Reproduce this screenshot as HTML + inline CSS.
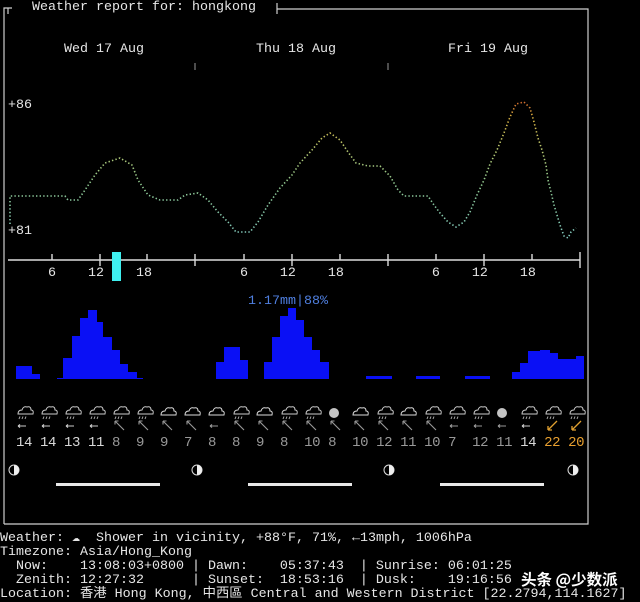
<!DOCTYPE html>
<html><head><meta charset="utf-8">
<style>
html,body{margin:0;padding:0;background:#000;width:640px;height:602px;overflow:hidden}
body{position:relative;font-family:"Liberation Mono","DejaVu Sans Mono","Noto Sans CJK SC",monospace;font-size:13.33px;color:#e6e6e6}
.t{position:absolute;white-space:pre;line-height:14px}
svg{position:absolute;left:0;top:0}
</style></head><body>
<svg width="640" height="602" viewBox="0 0 640 602">
<defs>
<linearGradient id="tg" x1="0" y1="100" x2="0" y2="240" gradientUnits="userSpaceOnUse">
<stop offset="0" stop-color="#d0602a"/><stop offset="0.12" stop-color="#d8b040"/><stop offset="0.35" stop-color="#b8c870"/><stop offset="0.6" stop-color="#8fc890"/><stop offset="1" stop-color="#80c8c0"/>
</linearGradient>
<g id="cl" fill="none" stroke="#ccc" stroke-width="1"><path d="M-6 2 q0 -4 4 -4 q1 -4 5 -3 q4 -1 4 3 q3 0 2 4 z"/><path d="M-4 4.5 l-1 2.5 M-1 4.5 l-1 2.5 M2 4.5 l-1 2.5" stroke="#aaa"/></g>
<g id="cl2" fill="none" stroke="#ddd" stroke-width="1"><path d="M-7 3 q0 -4 4 -4 q1 -4 5 -3 q4 -1 4 3 q3 0 2 4 z"/></g>
<g id="aw" stroke-width="1.1" fill="none"><path d="M-4 0 H4 M-4 0 l2 -1.6 M-4 0 l2 1.6"/></g>
<g id="anw" stroke-width="1.1" fill="none"><path d="M-5 -5 L4 4 M-5 -5 h3.5 M-5 -5 v3.5"/></g>
<g id="asw" stroke-width="1.3" fill="none"><path d="M5 -5 L-4 4 M-4 4 h4 M-4 4 v-4"/></g>
<g id="moon"><circle r="5" fill="#000" stroke="#ddd" stroke-width="1"/><path d="M0 -5 A5 5 0 0 1 0 5 Z" fill="#eee"/></g>
</defs>
<g stroke="#cfcfcf" stroke-width="1.2" fill="none">
<path d="M4 524 V8 H12 M8 8 V14"/>
<path d="M277 3 V14 M277 9 H588 V524 H4"/>
</g>
<g stroke="#999" stroke-width="1">
<path d="M195 63 V70 M388 63 V70"/>
</g>
<polyline fill="none" stroke="url(#tg)" stroke-width="1.6" stroke-dasharray="1.4 2.2"
points="10,224 10,196 65,196 68,200 78,200 85,190 95,175 105,163 120,158 132,165 138,180 148,195 160,200 178,200 185,195 198,193 208,200 218,212 228,222 236,232 250,232 258,222 268,205 280,188 292,175 300,163 312,150 322,138 330,133 340,140 348,152 356,163 368,166 380,166 390,176 398,190 404,196 428,196 434,205 440,213 448,222 456,227 464,222 470,212 477,195 484,180 490,164 497,150 504,133 510,117 516,104 524,102 530,108 534,122 538,138 542,150 546,165 548,180 551,192 554,205 557,215 560,225 564,236 568,238 571,232 576,228"/>
<g stroke="#ddd" stroke-width="1.4" fill="none">
<path d="M8 260 H580"/>
<path d="M52 254 V260 M100 254 V266 M147 254 V260 M195 254 V266 M244 254 V260 M292 254 V266 M340 254 V260 M388 254 V266 M436 254 V260 M484 254 V266 M532 254 V260 M580 252 V268"/>
</g>
<rect x="112" y="252" width="9" height="29" fill="#3ff0f0"/>
<g fill="#0a10f5">
<path d="M16 379 V366 H32 V374 H40 V379 Z"/>
<path d="M57 379 V378 H63 V358 H72 V336 H80 V318 H88 V310 H97 V322 H103 V337 H112 V350 H120 V364 H128 V372 H137 V378 H143 V379 Z"/>
<path d="M216 379 V362 H224 V347 H240 V360 H248 V379 Z"/>
<path d="M264 379 V362 H272 V337 H280 V316 H288 V308 H296 V320 H304 V337 H312 V350 H320 V362 H329 V379 Z"/>
<path d="M366 379 V376 H392 V379 Z M416 379 V376 H440 V379 Z M465 379 V376 H490 V379 Z"/>
<path d="M512 379 V372 H520 V363 H528 V351 H540 V350 H550 V353 H558 V359 H568 V359 H576 V356 H584 V379 Z"/>
</g>
<g>
<use href="#cl" x="24" y="412"/><use href="#cl" x="48" y="412"/><use href="#cl" x="72" y="412"/><use href="#cl" x="96" y="412"/>
<use href="#cl" x="120" y="412"/><use href="#cl" x="144" y="412"/><use href="#cl2" x="168" y="412"/><use href="#cl2" x="192" y="412"/>
<use href="#cl2" x="216" y="412"/><use href="#cl" x="240" y="412"/><use href="#cl2" x="264" y="412"/><use href="#cl" x="288" y="412"/>
<use href="#cl" x="312" y="412"/><circle cx="334" cy="413" r="5" fill="#c4c4c4"/><use href="#cl2" x="360" y="412"/><use href="#cl" x="384" y="412"/>
<use href="#cl2" x="408" y="412"/><use href="#cl" x="432" y="412"/><use href="#cl" x="456" y="412"/><use href="#cl" x="480" y="412"/>
<circle cx="502" cy="413" r="5" fill="#c4c4c4"/><use href="#cl" x="528" y="412"/><use href="#cl" x="552" y="412"/><use href="#cl" x="576" y="412"/>
</g>
<g stroke="#ccc"><use href="#aw" x="22" y="426"/><use href="#aw" x="46" y="426"/><use href="#aw" x="70" y="426"/><use href="#aw" x="94" y="426"/><use href="#aw" x="526" y="426"/></g>
<g stroke="#999">
<use href="#anw" x="120" y="426"/><use href="#anw" x="144" y="426"/><use href="#anw" x="168" y="426"/><use href="#anw" x="192" y="426"/>
<use href="#aw" x="214" y="426"/>
<use href="#anw" x="240" y="426"/><use href="#anw" x="264" y="426"/><use href="#anw" x="288" y="426"/><use href="#anw" x="312" y="426"/>
<use href="#anw" x="336" y="426"/><use href="#anw" x="360" y="426"/><use href="#anw" x="384" y="426"/><use href="#anw" x="408" y="426"/><use href="#anw" x="432" y="426"/>
<use href="#aw" x="454" y="426"/><use href="#aw" x="478" y="426"/><use href="#aw" x="502" y="426"/>
</g>
<g stroke="#e0a030"><use href="#asw" x="552" y="426"/><use href="#asw" x="576" y="426"/></g>
<use href="#moon" x="14" y="470"/><use href="#moon" x="197" y="470"/><use href="#moon" x="389" y="470"/><use href="#moon" x="573" y="470"/>
<g fill="#e8e8e8"><rect x="56" y="483" width="104" height="3"/><rect x="248" y="483" width="104" height="3"/><rect x="440" y="483" width="104" height="3"/></g>
</svg>

<div class="t" style="left:32px;top:1px">Weather report for: hongkong</div>
<div class="t" style="left:64px;top:43px">Wed 17 Aug</div>
<div class="t" style="left:256px;top:43px">Thu 18 Aug</div>
<div class="t" style="left:448px;top:43px">Fri 19 Aug</div>
<div class="t" style="left:8px;top:99px">+86</div>
<div class="t" style="left:8px;top:225px">+81</div>
<div class="t" style="left:0;top:267px">      6    12    18           6    12    18           6    12    18</div>
<div class="t" style="left:248px;top:295px;color:#4f7fdf">1.17mm|88%</div>

<div class="t" style="left:16px;top:436px;font-size:14px;letter-spacing:-0.4px;color:#d8d8d8">14 14 13 11 <span style="color:#999">8  9  9  7  8  8  9  8  10 8  10 12 11 10 7  12 11 </span>14 <span style="color:#e8a030">22 20</span></div>

<div class="t" style="left:0;top:532px">Weather: ☁  Shower in vicinity, +88°F, 71%, ←13mph, 1006hPa
Timezone: Asia/Hong_Kong
  Now:    13:08:03+0800 | Dawn:    05:37:43  | Sunrise: 06:01:25
  Zenith: 12:27:32      | Sunset:  18:53:16  | Dusk:    19:16:56
Location: 香港 Hong Kong, 中西區 Central and Western District [22.2794,114.1627]</div>
<div class="t" style="left:521px;top:569px;font-family:'Noto Sans CJK SC',sans-serif;font-size:15.5px;font-weight:bold;color:#fff;line-height:20px;text-shadow:0 0 2px #000">头条 @少数派</div>
</body></html>
